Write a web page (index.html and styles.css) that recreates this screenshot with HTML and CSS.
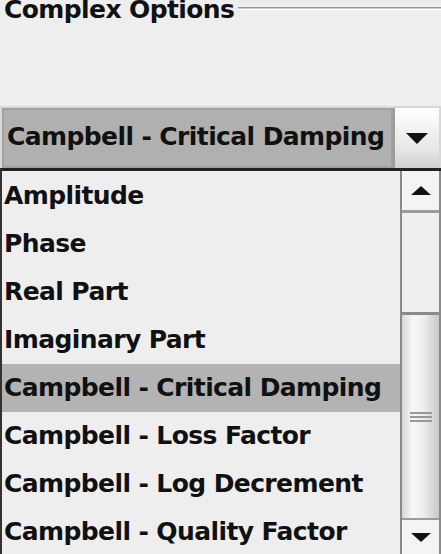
FILE: index.html
```html
<!DOCTYPE html>
<html lang="en">
<head>
    <meta charset="UTF-8">
    <title>Complex Options</title>
    <link rel="stylesheet" href="styles.css">
</head>
<body>
    <div class="panel">
        <!-- Titled border -->
        <div class="panel-title">
            <span class="title-text">Complex Options</span>
            <span class="title-line"></span>
        </div>

        <!-- Combo box -->
        <div class="combo">
            <div class="combo-value">Campbell - Critical Damping</div>
            <div class="combo-button">
                <span class="arrow-down"></span>
            </div>
        </div>

        <!-- Popup list -->
        <div class="popup">
            <ul class="list">
                <li>Amplitude</li>
                <li>Phase</li>
                <li>Real Part</li>
                <li>Imaginary Part</li>
                <li class="selected">Campbell - Critical Damping</li>
                <li>Campbell - Loss Factor</li>
                <li>Campbell - Log Decrement</li>
                <li>Campbell - Quality Factor</li>
            </ul>
            <div class="scrollbar">
                <div class="scroll-btn up"><span class="arrow-up"></span></div>
                <div class="track">
                    <div class="thumb">
                        <span class="grip"></span>
                    </div>
                </div>
                <div class="scroll-btn down"><span class="arrow-down small"></span></div>
            </div>
        </div>
    </div>
</body>
</html>
```

FILE: styles.css
```css
/* Reset and base styles */
* {
    margin: 0;
    padding: 0;
    box-sizing: border-box;
}

body {
    font-family: "DejaVu Sans", Tahoma, sans-serif;
    font-weight: bold;
    background-color: #eeeeee;
    color: #111;
    width: 441px;
    height: 554px;
    overflow: hidden;
}

.panel {
    display: flex;
    flex-direction: column;
    height: 554px;
}

/* Titled border */
.panel-title {
    display: flex;
    align-items: flex-start;
    height: 106px;
}

.title-text {
    font-size: 25px;
    line-height: 25px;
    margin-top: -3px;
    padding-left: 4px;
    letter-spacing: -0.6px;
}

.title-line {
    flex: 1;
    height: 3px;
    margin-top: 7px;
    margin-left: 4px;
    border-top: 1px solid #9a9a9a;
    border-bottom: 1px solid #fff;
    background-color: #c8c8c8;
}

/* Combo box */
.combo {
    display: flex;
    height: 62px;
    border: 2px solid #d8d8d8;
    border-bottom: none;
}

.combo-value {
    flex: 1;
    background-color: #b0b0b0;
    border: 2px solid #a0a0a0;
    font-size: 25px;
    line-height: 54px;
    padding-left: 3px;
    letter-spacing: -0.6px;
    white-space: nowrap;
    overflow: hidden;
}

.combo-button {
    width: 46px;
    display: flex;
    align-items: center;
    justify-content: center;
    border-left: 2px solid #9c9c9c;
    background: linear-gradient(to bottom, #ffffff, #e6e6e6 70%, #d0d0d0);
}

.arrow-down {
    width: 0;
    height: 0;
    border-left: 11px solid transparent;
    border-right: 11px solid transparent;
    border-top: 11px solid #111;
}

.arrow-down.small {
    border-left-width: 10px;
    border-right-width: 10px;
    border-top-width: 9px;
}

.arrow-up {
    width: 0;
    height: 0;
    border-left: 10px solid transparent;
    border-right: 10px solid transparent;
    border-bottom: 9px solid #111;
}

/* Popup list */
.popup {
    flex: 1;
    display: flex;
    border-top: 3px solid #222;
    border-left: 2px solid #333;
    min-height: 0;
}

.list {
    flex: 1;
    list-style: none;
    padding-top: 1px;
}

.list li {
    height: 48px;
    font-size: 25px;
    line-height: 48px;
    padding-left: 2px;
    letter-spacing: -0.6px;
    white-space: nowrap;
}

.list li.selected {
    background-color: #b3b3b3;
}

/* Scrollbar */
.scrollbar {
    width: 41px;
    display: flex;
    flex-direction: column;
    border-left: 2px solid #8a8a8a;
    border-right: 2px solid #8a8a8a;
    background-color: #f2f2f2;
}

.scroll-btn {
    height: 42px;
    display: flex;
    align-items: center;
    justify-content: center;
    background-color: #f4f4f4;
}

.scroll-btn.up {
    border-bottom: 3px solid #9a9a9a;
}

.scroll-btn.down {
    height: 36px;
    border-top: 2px solid #9a9a9a;
}

.track {
    flex: 1;
    display: flex;
    flex-direction: column;
    justify-content: flex-end;
    background-color: #efefef;
}

.thumb {
    height: 206px;
    display: flex;
    align-items: center;
    justify-content: center;
    border-top: 3px solid #8a8a8a;
    background: linear-gradient(to right, #d8d8d8, #f8f8f8 30%, #ececec 60%, #c8c8c8);
}

.grip {
    width: 22px;
    height: 10px;
    border-top: 2px solid #999;
    border-bottom: 2px solid #999;
    position: relative;
}

.grip::after {
    content: "";
    position: absolute;
    left: 0;
    right: 0;
    top: 2px;
    border-top: 2px solid #999;
}
```
